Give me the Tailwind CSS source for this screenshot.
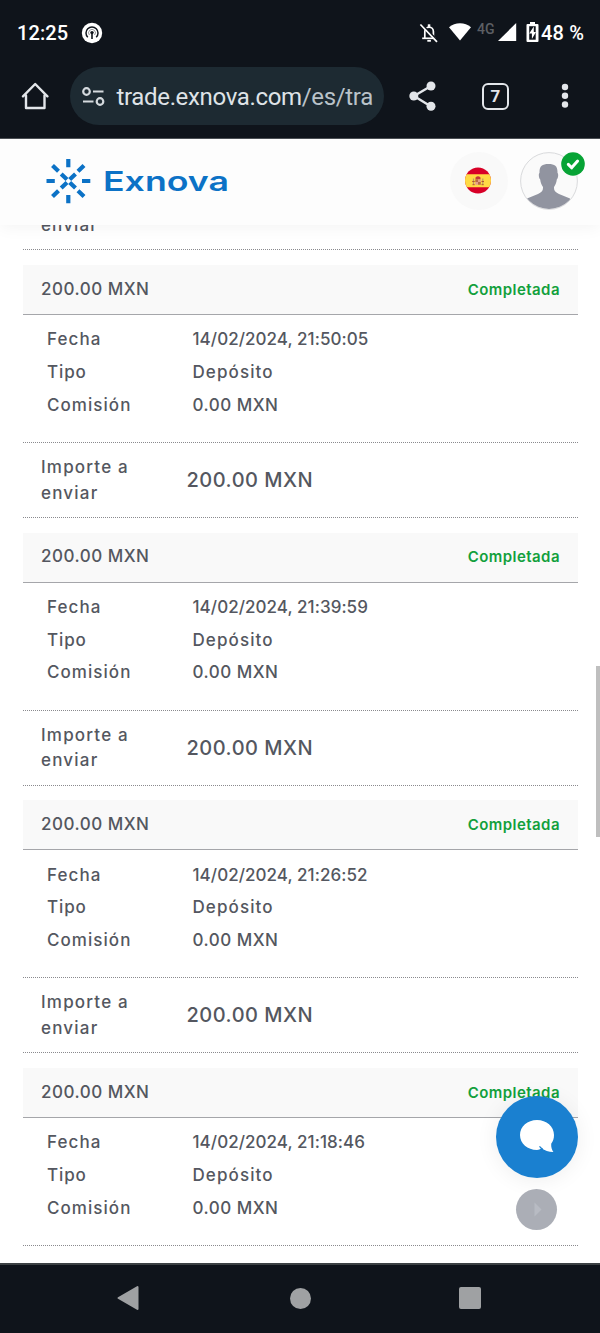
<!DOCTYPE html>
<html lang="es">
<head>
    <meta charset="UTF-8">
    <meta name="viewport" content="width=device-width, initial-scale=1.0">
    <title>Exnova</title>
    <script src="https://cdn.jsdelivr.net/npm/@tailwindcss/browser@4"></script>
</head>
<body class="bg-white font-['Inter',sans-serif]">
    <div class="relative flex flex-col w-[600px] h-[1333px] overflow-hidden">

        <!-- Status bar -->
        <div class="flex items-center h-[65px] shrink-0 bg-[#0f141b] pl-[17px] pr-[15px] text-white font-['Roboto',sans-serif] font-medium text-[20px]">
            <span class="w-[52px] whitespace-nowrap tracking-[0.1px]">12:25</span>
            <svg class="ml-[12px]" width="22" height="22" viewBox="0 0 22 22" fill="none">
                <circle cx="11" cy="11" r="10.2" fill="#fff"/>
                <path d="M6.8 15.2a6 6 0 1 1 8.4 0" stroke="#0f141b" stroke-width="1.5"/>
                <path d="M8.4 13a3.4 3.4 0 1 1 5.2 0" stroke="#0f141b" stroke-width="1" opacity=".45"/>
                <circle cx="11" cy="10.6" r="1.7" fill="#0f141b"/>
                <path d="M11 11v6" stroke="#0f141b" stroke-width="1.6"/>
            </svg>
            <div class="flex items-center ml-auto">
                <svg width="20" height="20" viewBox="0 0 20 20" fill="none" stroke="#fff">
                    <path d="M5.8 15V8.5a4.3 4.3 0 0 1 8.6 0V15" stroke-width="1.7"/>
                    <path d="M3.2 15.3h13.6" stroke-width="1.7"/>
                    <path d="M8.8 2.6h2.5" stroke-width="2.6"/>
                    <path d="M8.3 17.8h3.6" stroke-width="1.8"/>
                    <path d="M2.8 1.3 19 18.2" stroke="#0f141b" stroke-width="2"/>
                    <path d="M1.4 1.5 18 18.9" stroke-width="1.7"/>
                </svg>
                <svg class="ml-[10px] -mt-px" width="22" height="18" viewBox="0 0 22 18"><path d="M0 4.2C6-1.200 16-1.200 22 4.2L11 17.600z" fill="#fff"/></svg>
                <span class="ml-[6px] -mt-[8px] w-[19px] text-[14px] leading-none text-[#5c5f64] whitespace-nowrap">4G</span>
                <svg class="ml-[2px] -mt-px" width="19" height="18" viewBox="0 0 19 18"><path d="M18.2 0v18H0z" fill="#fff"/></svg>
                <svg class="ml-[9px] -mt-px" width="13" height="20" viewBox="0 0 13 20">
                    <path d="M4 0h5v2h2.500q1 0 1 1v16q0 1-1 1h-10q-1 0-1-1V3q0-1 1-1H4z" fill="#fff"/>
                    <path d="M3.200 4.200h6.500v13.500H3.200z" fill="#0f141b"/>
                    <path d="M7.800 4.500 3.200 11.500h2.700v5.500L10 10H7.800z" fill="#fff"/>
                </svg>
                <span class="ml-[2px] w-[44px] whitespace-nowrap tracking-[0.2px]">48 %</span>
            </div>
        </div>

        <!-- Browser toolbar -->
        <div class="flex items-center h-[74px] shrink-0 bg-[#0f141b] border-b border-[#4b4f54] pl-[21px] pb-[11px]">
            <svg width="28" height="28" viewBox="0 0 28 28" fill="none" stroke="#e3e6ea" stroke-width="2.4" stroke-linejoin="round" stroke-linecap="round">
                <path d="M5 13.500V26h18.500V13.500"/>
                <path d="M2 14.300 14.200 2l12.200 12.300"/>
            </svg>
            <div class="flex items-center ml-[21px] w-[314px] h-[58px] rounded-full bg-[#1d2a32] pl-[12px]">
                <svg width="23" height="19" viewBox="0 0 23 19" fill="none" stroke="#d5dade" stroke-width="2.2">
                    <circle cx="4.500" cy="4.500" r="3.300"/>
                    <path d="M11 4.500h10.500M1 14.500h10.500"/>
                    <circle cx="18" cy="14.500" r="3.300"/>
                </svg>
                <span class="ml-[11.5px] pt-px whitespace-nowrap font-['Roboto',sans-serif] text-[24px] tracking-[-0.34px] text-[#dfe3e7]">trade.exnova.com<span class="text-[#b9c2c9]">/es/tra</span></span>
            </div>
            <svg class="ml-[25px]" width="28" height="30" viewBox="0 0 28 30" fill="#e3e6ea">
                <path d="M22 5 5 15l17 10.500" fill="none" stroke="#e3e6ea" stroke-width="2.4"/>
                <circle cx="22" cy="5" r="4.500"/><circle cx="4.800" cy="15" r="4.500"/><circle cx="22" cy="25.300" r="4.500"/>
            </svg>
            <div class="ml-[45px] flex items-center justify-center w-[27px] h-[27px] rounded-[6px] border-[2.5px] border-[#e3e6ea] text-[#e3e6ea] font-['Roboto',sans-serif] font-bold text-[17px] leading-none">7</div>
            <svg class="ml-[52px]" width="8" height="26" viewBox="0 0 8 26" fill="#e3e6ea">
                <circle cx="4" cy="4" r="3.200"/><circle cx="4" cy="12.800" r="3.200"/><circle cx="4" cy="21.500" r="3.200"/>
            </svg>
        </div>

        <!-- Page -->
        <main class="relative flex-1 min-h-0 overflow-hidden">
            <header class="relative z-10 flex items-center h-[86px] bg-[#fdfdfd] pl-[46px] pr-[22px] shadow-[0_2px_16px_rgba(0,0,0,0.05)]">
                <svg class="-mt-[3px]" width="184" height="46" viewBox="0 0 184 46">
                    <g stroke="#0c72c6" stroke-width="4.200">
                        <path d="M22.300 1v8.300M22.300 37v8.300M.5 23h8.300M36 23h8.300"/>
                        <path d="m6.500 7.500 6 5.800M38 7.500l-6 5.800M6.500 38.500l6-5.800M38 38.500l-6-5.800"/>
                        <path d="m15.200 16 5.800 5.500M29.500 16l-5.800 5.500M15.200 30l5.800-5.500M29.500 30l-5.800-5.500"/>
                    </g>
                    <text x="57" y="33" textLength="126" lengthAdjust="spacingAndGlyphs" font-family="Inter, sans-serif" font-size="27" font-weight="600" fill="#0c72c6">Exnova</text>
                </svg>
                <div class="ml-auto -mt-[3px] flex items-center justify-center w-[58px] h-[58px] rounded-full bg-[#f9f9f9]">
                    <svg class="-ml-[3px]" width="26" height="27" viewBox="0 0 26 27">
                        <clipPath id="flag"><circle cx="13" cy="13.500" r="13"/></clipPath>
                        <g clip-path="url(#flag)">
                            <path d="M0 0h26v27H0z" fill="#d80027"/>
                            <path d="M0 7.300h26v12.900H0z" fill="#ffda44"/>
                        </g>
                        <path d="M10.500 10.500q2.500-2.500 5 0v2h-5z" fill="#c43a3c"/>
                        <path d="M10.300 12.500h2.700v2.500h-2.700zm2.700 2.500h2.800v2.800h-2.800z" fill="#b86a45"/>
                        <path d="M13 12.500h2.800V15H13zm-2.700 2.500H13v2.800h-2.700z" fill="#e6a08a"/>
                        <path d="M8.500 11.500v6M17.800 11.500v6" stroke="#b99a6a" stroke-width="1.200"/>
                        <path d="M7.200 14.500h2.500M16.500 14.500H19M7.500 17.700h2.200M16.500 17.700h2.200" stroke="#b5562f"/>
                    </svg>
                </div>
                <div class="relative ml-[12px] -mt-[3px] w-[58px] h-[58px]">
                    <svg width="58" height="58" viewBox="0 0 58 58">
                        <clipPath id="avatar"><circle cx="29" cy="29" r="28"/></clipPath>
                        <circle cx="29" cy="29" r="28.400" fill="#fafafa" stroke="#d9dadc"/>
                        <path clip-path="url(#avatar)" d="M28.500 12c6.500 0 9.300 2 9 9 1.200.8.700 5.500-.7 6.500-.3 3.500-1.500 5.500-2.800 7.500-.3 4 1.500 5.500 5 7L50 46.500V58H7V46.500l11-4.500c3.500-1.500 5.300-3 5-7-1.300-2-2.500-4-2.800-7.500-1.400-1-1.900-5.700-.7-6.500-.3-7 2.500-9 9-9z" fill="#9194a0"/>
                    </svg>
                    <svg class="absolute left-[41px] top-0" width="24" height="24" viewBox="0 0 24 24">
                        <circle cx="12" cy="12" r="11.800" fill="#07a335"/>
                        <path d="m7.300 12.400 3.300 3.400 6-6.800" fill="none" stroke="#fff" stroke-width="3" stroke-linecap="round" stroke-linejoin="round"/>
                    </svg>
                </div>
            </header>

            <div class="pl-[23px] pr-[22px] text-[17px] font-medium text-[#545760]">
                <div class="-mt-[13.5px] h-[38.5px] pl-[18px] leading-[26px] tracking-[1.1px] border-b border-dotted border-[#8a8a8e]">enviar</div>
                <div id="operations" class="pt-[15px]"></div>
            </div>
        </main>

        <!-- Navigation bar -->
        <nav class="relative z-10 h-[70px] shrink-0 flex items-center justify-between bg-[#0f141b] border-t-2 border-[#3c4144] pl-[117px] pr-[119px] pb-[2px]">
            <svg width="22" height="26" viewBox="0 0 22 26"><path d="M20.500 2v22L1.500 13z" fill="#9fa1a3" stroke="#9fa1a3" stroke-width="2" stroke-linejoin="round"/></svg>
            <span class="ml-[2px] w-[21px] h-[21px] rounded-full bg-[#9fa1a3]"></span>
            <span class="w-[22px] h-[22px] rounded-[2px] bg-[#9fa1a3]"></span>
        </nav>

        <!-- Scrollbar thumb -->
        <div class="absolute left-[596px] top-[666px] w-[4px] h-[171px] bg-[#bfbfbf]"></div>

        <!-- Floating buttons -->
        <button class="absolute left-[496px] top-[1096px] w-[82px] h-[82px] rounded-full bg-[#1a80d0] shadow-[0_2px_22px_rgba(0,0,0,0.07)]" aria-label="Chat">
            <svg class="absolute left-[24px] top-[24px]" width="35" height="33" viewBox="0 0 35 33">
                <path d="M17 0C26.500 0 34 6.500 34 15c0 3.800-.9 6.200-2.800 8.700-.2 3.500.6 5.800 2.200 8.300-5-.3-8.500-1.300-12-3.800Q19.500 30 17 30C7.500 30 0 23.500 0 15S7.500 0 17 0z" fill="#fff"/>
                <path d="M19.500 26.300q1.500 2 3.200 2.800" fill="none" stroke="#1a80d0" stroke-width="1.200"/>
            </svg>
        </button>
        <button class="absolute left-[516px] top-[1189px] w-[41px] h-[41px] rounded-full bg-[#abaeb6]" aria-label="Siguiente">
            <svg class="absolute left-[18px] top-[13px]" width="8" height="15" viewBox="0 0 8 15"><path d="M.5.500v14L7.500 7.500z" fill="#b8bbc3"/></svg>
        </button>
    </div>

    <template id="operation">
        <article class="h-[267.7px]">
            <div class="flex items-center justify-between h-[50px] px-[18px] bg-[#f9f9f9] border-b border-[#a5a6aa]">
                <span class="tracking-[0.5px]">200.00 MXN</span>
                <span class="pt-px text-[15px] font-semibold text-[#12a03c] tracking-[0.45px]">Completada</span>
            </div>
            <dl class="grid grid-cols-[145.5px_1fr] auto-rows-[32.8px] items-center h-[127px] pl-[24px] pt-[8.5px]">
                <dt class="tracking-[1.1px]">Fecha</dt><dd class="date tracking-[0.05px]"></dd>
                <dt class="tracking-[0.9px]">Tipo</dt><dd class="tracking-[1.1px]">Depósito</dd>
                <dt class="tracking-[1.05px]">Comisión</dt><dd class="tracking-[0.5px]">0.00 MXN</dd>
            </dl>
            <div class="amount flex items-center h-[76px] pl-[18px] border-y border-dotted border-[#8a8a8e]">
                <span class="w-[145.5px] pt-px leading-[25.5px] tracking-[1.2px]">Importe a<br>enviar</span>
                <span class="text-[20px] tracking-[0.5px]">200.00 MXN</span>
            </div>
        </article>
    </template>

    <script>
        const dates = ['14/02/2024, 21:50:05', '14/02/2024, 21:39:59', '14/02/2024, 21:26:52', '14/02/2024, 21:18:46'];
        const list = document.getElementById('operations');
        const template = document.getElementById('operation');
        dates.forEach((date, i) => {
            const item = template.content.cloneNode(true);
            item.querySelector('.date').textContent = date;
            // the last amount row is below the fold
            if (i === dates.length - 1) item.querySelector('.amount').replaceChildren();
            list.appendChild(item);
        });
    </script>
</body>
</html>
